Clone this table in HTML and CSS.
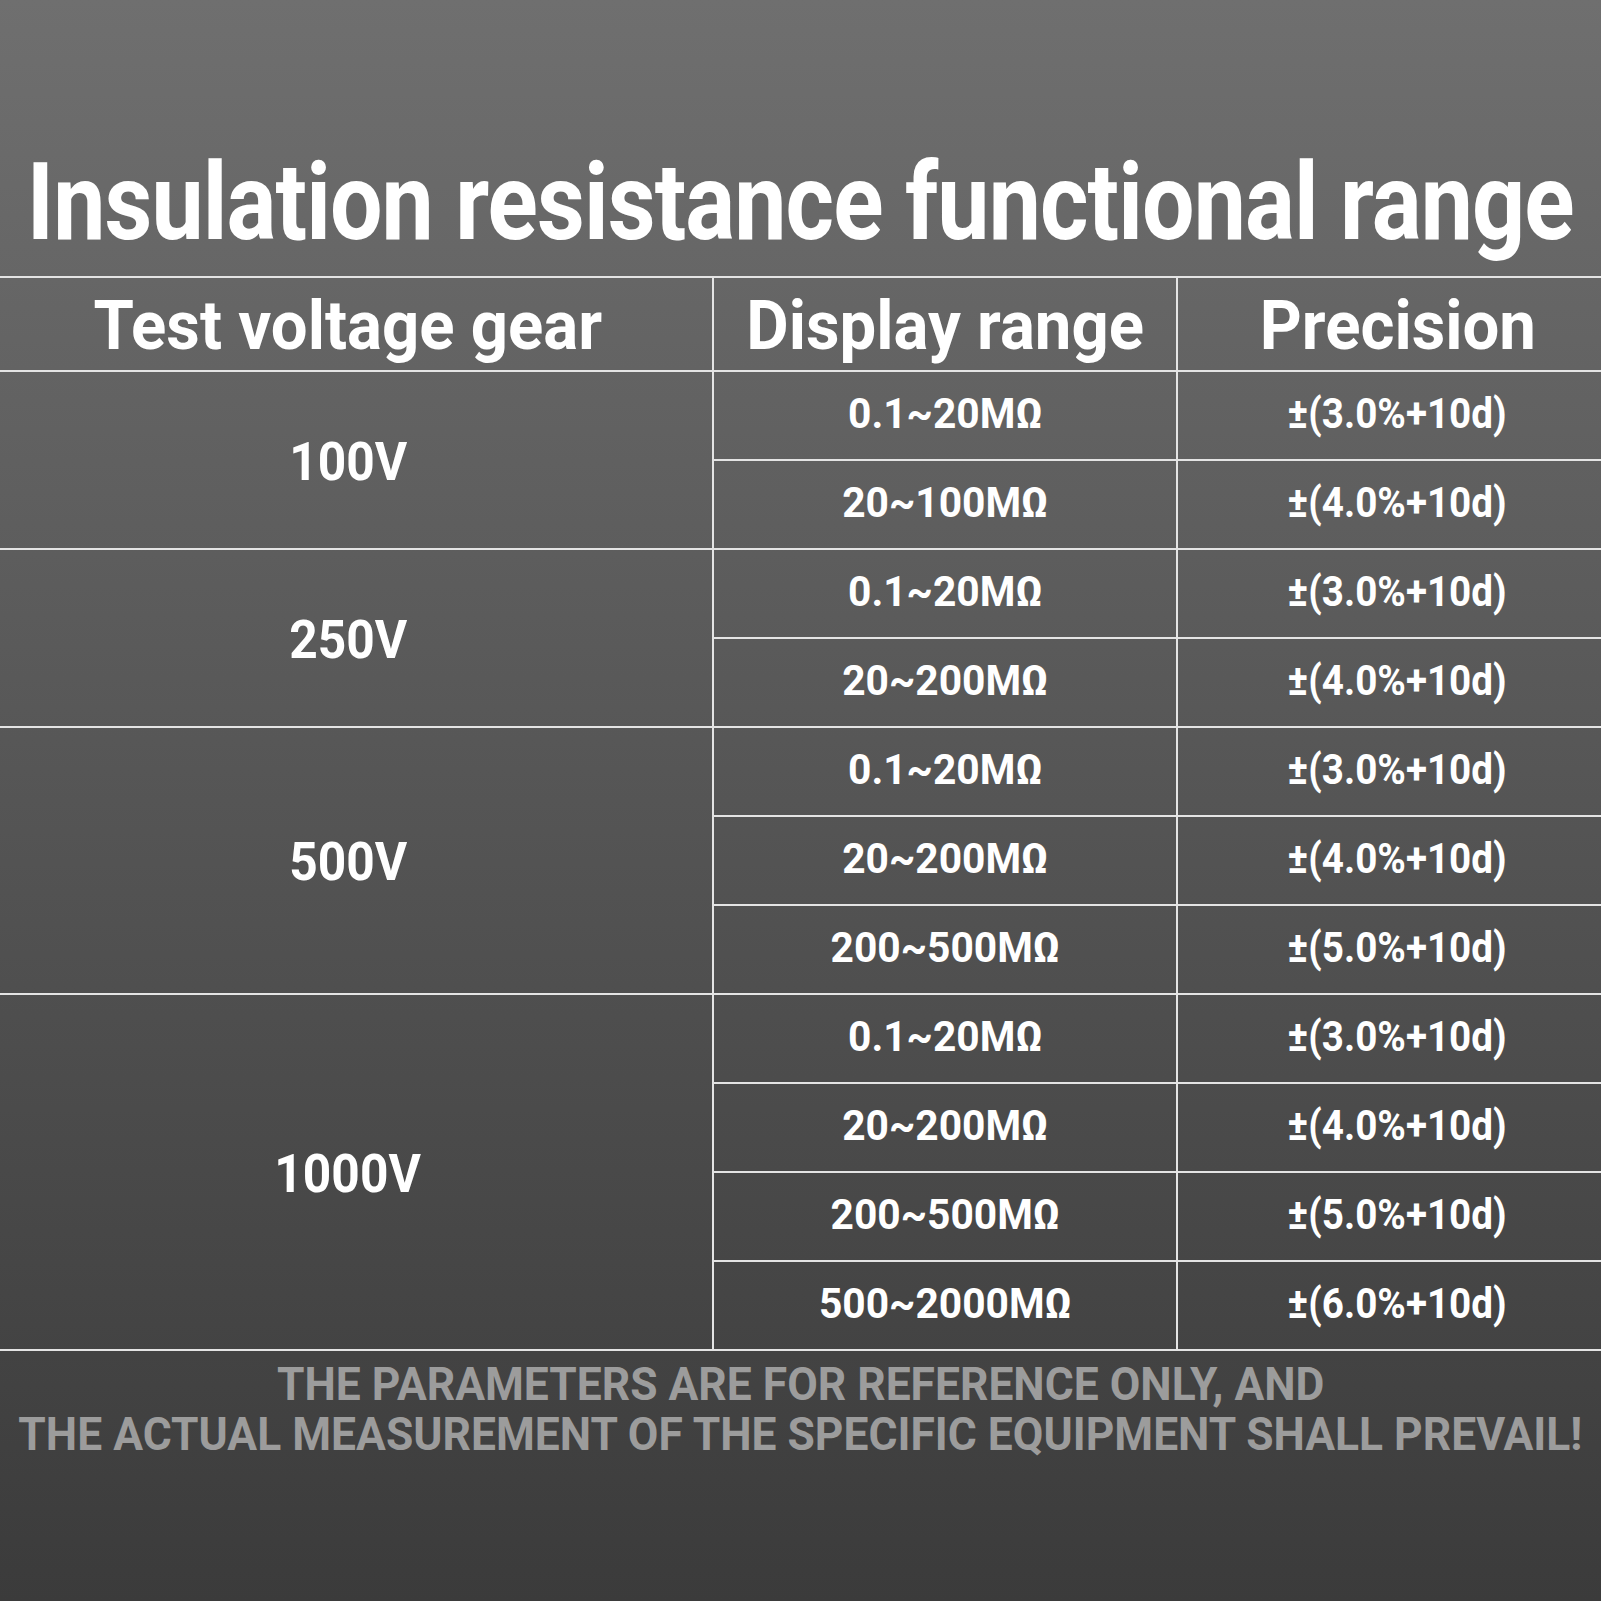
FILE: index.html
```html
<!DOCTYPE html>
<html>
<head>
<meta charset="utf-8">
<link rel="stylesheet" href="styles.css">
</head>
<body>
<div class="page">
  <div class="title"><span class="sq title-text">Insulation resistance functional range</span></div>
  <div class="table">
    <div class="cell head first"><span class="sq">Test voltage gear</span></div>
    <div class="cell head"><span class="sq">Display range</span></div>
    <div class="cell head last"><span class="sq">Precision</span></div>

    <div class="cell volt span2"><span class="sqv">100V</span></div>
    <div class="cell val"><span class="sqr">0.1~20MΩ</span></div><div class="cell val last"><span class="sqp">±(3.0%+10d)</span></div>
    <div class="cell val"><span class="sqr">20~100MΩ</span></div><div class="cell val last"><span class="sqp">±(4.0%+10d)</span></div>

    <div class="cell volt span2"><span class="sqv">250V</span></div>
    <div class="cell val"><span class="sqr">0.1~20MΩ</span></div><div class="cell val last"><span class="sqp">±(3.0%+10d)</span></div>
    <div class="cell val"><span class="sqr">20~200MΩ</span></div><div class="cell val last"><span class="sqp">±(4.0%+10d)</span></div>

    <div class="cell volt span3"><span class="sqv">500V</span></div>
    <div class="cell val"><span class="sqr">0.1~20MΩ</span></div><div class="cell val last"><span class="sqp">±(3.0%+10d)</span></div>
    <div class="cell val"><span class="sqr">20~200MΩ</span></div><div class="cell val last"><span class="sqp">±(4.0%+10d)</span></div>
    <div class="cell val"><span class="sqr">200~500MΩ</span></div><div class="cell val last"><span class="sqp">±(5.0%+10d)</span></div>

    <div class="cell volt span4"><span class="sqv">1000V</span></div>
    <div class="cell val"><span class="sqr">0.1~20MΩ</span></div><div class="cell val last"><span class="sqp">±(3.0%+10d)</span></div>
    <div class="cell val"><span class="sqr">20~200MΩ</span></div><div class="cell val last"><span class="sqp">±(4.0%+10d)</span></div>
    <div class="cell val"><span class="sqr">200~500MΩ</span></div><div class="cell val last"><span class="sqp">±(5.0%+10d)</span></div>
    <div class="cell val"><span class="sqr">500~2000MΩ</span></div><div class="cell val last"><span class="sqp">±(6.0%+10d)</span></div>
  </div>
  <div class="note">
    <span class="sqn">THE PARAMETERS ARE FOR REFERENCE ONLY, AND</span>
    <span class="sqn">THE ACTUAL MEASUREMENT OF THE SPECIFIC EQUIPMENT SHALL PREVAIL!</span>
  </div>
</div>
</body>
</html>
```

FILE: styles.css
```css
html, body {
  margin: 0;
  padding: 0;
}
body {
  width: 1601px;
  height: 1601px;
  overflow: hidden;
  font-family: Roboto, "Liberation Sans", sans-serif;
  font-weight: 700;
  color: #ffffff;
}
.page {
  width: 1601px;
  height: 1601px;
  background: linear-gradient(180deg, #6f6f6f 0%, #3b3b3b 100%);
  display: flex;
  flex-direction: column;
}
.title {
  height: 276px;
  display: flex;
  align-items: flex-end;
  justify-content: center;
  padding-bottom: 20px;
  box-sizing: border-box;
}
.sq {
  display: inline-block;
  white-space: nowrap;
}
.title-text {
  font-size: 108px;
  line-height: 108px;
  letter-spacing: -1px;
  transform: scaleX(0.862);
}
.table {
  display: grid;
  grid-template-columns: 714px 464px 423px;
  grid-template-rows: 94px repeat(11, 89px);
  border-top: 2px solid #e4e4e4;
}
.cell {
  box-sizing: border-box;
  border-right: 2px solid #e4e4e4;
  border-bottom: 2px solid #e4e4e4;
  display: flex;
  align-items: center;
  justify-content: center;
  white-space: nowrap;
}
.cell.last {
  border-right: none;
  padding-left: 16px;
}
.head {
  font-size: 68px;
  padding-top: 4px;
}
.head.first {
  padding-right: 16px;
}
.head .sq {
  transform: scaleX(0.96);
}
.volt {
  grid-column: 1;
  font-size: 54px;
  padding-right: 16px;
}
.sqv {
  display: inline-block;
  transform: scaleX(0.92);
  padding-top: 2px;
}
.span2 { grid-row: span 2; }
.span3 { grid-row: span 3; }
.span4 { grid-row: span 4; }
.val {
  font-size: 42px;
  padding-bottom: 4px;
}
.sqr {
  display: inline-block;
  transform: scaleX(0.97);
}
.sqp {
  display: inline-block;
  transform: scaleX(0.92);
}
.note {
  display: flex;
  flex-direction: column;
  align-items: center;
  padding-top: 8px;
  color: #9c9c9c;
  font-size: 46px;
  line-height: 50px;
}
.sqn {
  display: inline-block;
  white-space: nowrap;
  transform: scaleX(0.965);
}
```
